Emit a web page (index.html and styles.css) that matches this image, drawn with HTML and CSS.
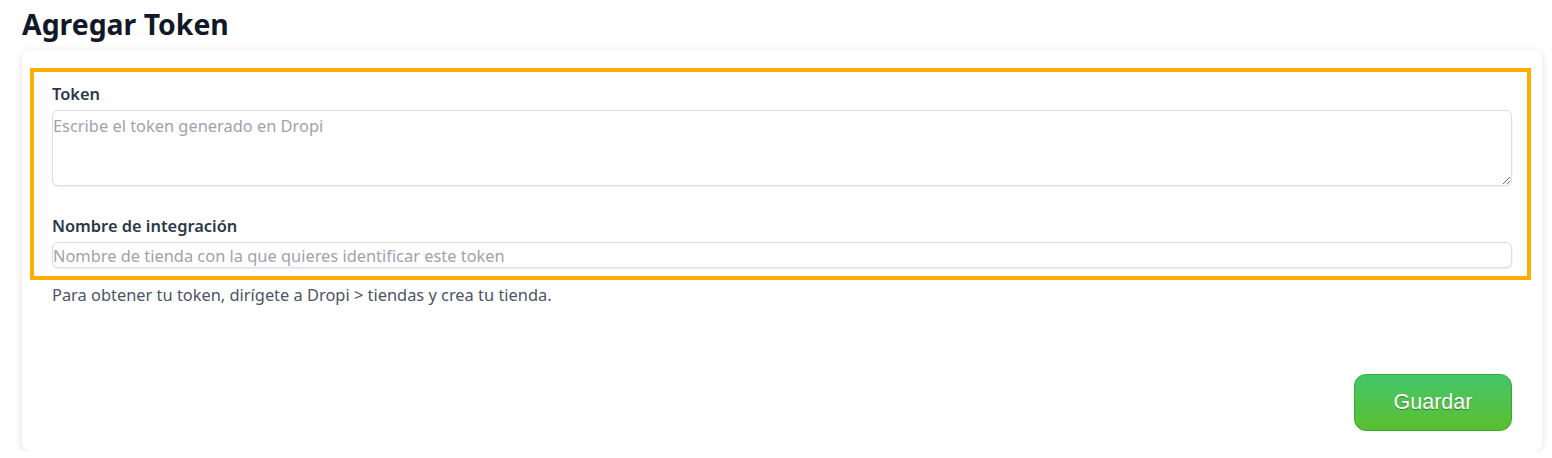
FILE: index.html
```html
<!DOCTYPE html>
<html>
    <head>
        <title>Agregar Token</title>
        <link rel="stylesheet" href="styles.css">
    </head>
    <body>
        <h1 class="pageTitle">Agregar Token</h1>

        <div class="card">
            <form class="token-form">
                <div class="highlight">
                    <label class="field-label" for="token">Token</label>
                    <textarea id="token" class="field-area" placeholder="Escribe el token generado en Dropi"></textarea>

                    <label class="field-label second" for="nombre">Nombre de integración</label>
                    <input id="nombre" class="field-input" type="text" placeholder="Nombre de tienda con la que quieres identificar este token" />
                </div>
                <p class="hint">Para obtener tu token, dirígete a Dropi &gt; tiendas y crea tu tienda.</p>

                <div class="actions">
                    <button type="submit" class="save-btn">Guardar</button>
                </div>
            </form>
        </div>
    </body>
</html>
```

FILE: styles.css
```css
* {
    box-sizing: border-box;
    margin: 0;
    padding: 0;
    font-family: 'Segoe UI', 'Noto Sans', sans-serif;
}

body {
    background: #ffffff;
    padding: 0 10px 0 22px;
}

.pageTitle {
    font-size: 28.4px;
    font-weight: bold;
    color: #111827;
    line-height: 36px;
    padding-top: 6px;
    height: 50px;
}

.card {
    background: white;
    border-radius: 8px;
    box-shadow: 0 2px 10px rgba(0,0,0,0.12);
    padding: 18px 11px 20px 8px;
}

.highlight {
    border: 4px solid #ffad00;
    padding: 11px 15px 8px 18px;
    display: flex;
    flex-direction: column;
}

.field-label {
    font-size: 16.4px;
    font-weight: 600;
    color: #2d3748;
    line-height: 22px;
    margin-bottom: 5px;
}

.field-label.second {
    margin-top: 29px;
}

.field-area {
    height: 76px;
    border: 1px solid #dcdde3;
    border-radius: 6px;
    box-shadow: 0 1px 2px rgba(0,0,0,0.08);
    padding: 3px 0 0 0;
    font-size: 16.4px;
    color: #333;
    resize: vertical;
}

.field-input {
    height: 26px;
    border: 1px solid #dcdde3;
    border-radius: 6px;
    box-shadow: 0 1px 2px rgba(0,0,0,0.08);
    padding: 0;
    font-size: 16.4px;
    color: #333;
}

.field-area::placeholder,
.field-input::placeholder {
    color: #9ca3af;
}

.hint {
    margin: 4px 0 0 22px;
    font-size: 16.4px;
    line-height: 22px;
    color: #4b5563;
}

.actions {
    display: flex;
    justify-content: flex-end;
    margin-top: 68px;
    padding-right: 19px;
}

.save-btn {
    width: 158px;
    height: 57px;
    background: linear-gradient(to bottom, #44c66c, #5bbf2f);
    border: 1px solid #2fac2c;
    border-radius: 12px;
    color: white;
    font-family: 'Liberation Sans', Arial, sans-serif;
    font-size: 21.5px;
    text-shadow: 0 1px 1px rgba(0,0,0,0.35);
    cursor: pointer;
}
```
